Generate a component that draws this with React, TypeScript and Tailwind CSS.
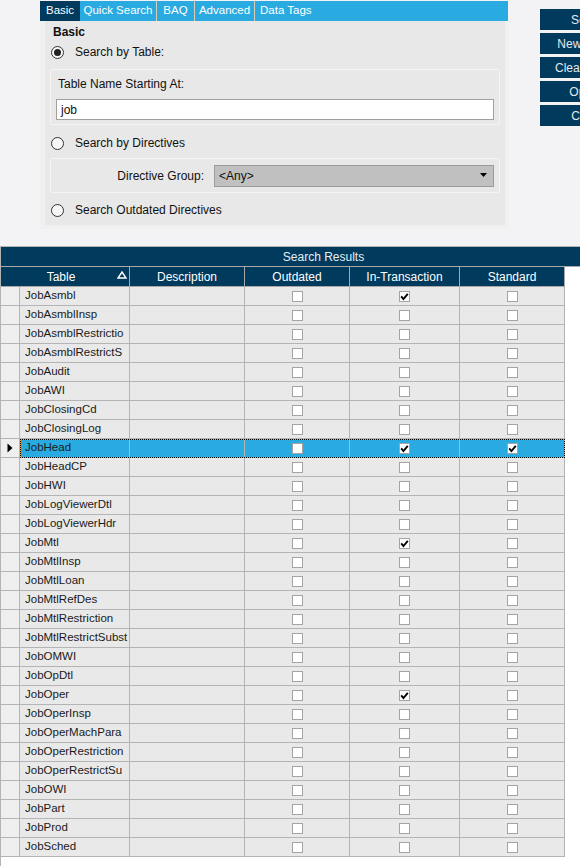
const rows: { name: string; outdated?: boolean; trans?: boolean; std?: boolean; selected?: boolean }[] = [
  { name: "JobAsmbl", trans: true },
  { name: "JobAsmblInsp" },
  { name: "JobAsmblRestrictio" },
  { name: "JobAsmblRestrictS" },
  { name: "JobAudit" },
  { name: "JobAWI" },
  { name: "JobClosingCd" },
  { name: "JobClosingLog" },
  { name: "JobHead", trans: true, std: true, selected: true },
  { name: "JobHeadCP" },
  { name: "JobHWI" },
  { name: "JobLogViewerDtl" },
  { name: "JobLogViewerHdr" },
  { name: "JobMtl", trans: true },
  { name: "JobMtlInsp" },
  { name: "JobMtlLoan" },
  { name: "JobMtlRefDes" },
  { name: "JobMtlRestriction" },
  { name: "JobMtlRestrictSubst" },
  { name: "JobOMWI" },
  { name: "JobOpDtl" },
  { name: "JobOper", trans: true },
  { name: "JobOperInsp" },
  { name: "JobOperMachPara" },
  { name: "JobOperRestriction" },
  { name: "JobOperRestrictSu" },
  { name: "JobOWI" },
  { name: "JobPart" },
  { name: "JobProd" },
  { name: "JobSched" },
];

function Radio({ checked, label }: { checked?: boolean; label: string }) {
  return (
    <div className="flex items-center h-[16px] ml-[6px]">
      <span className="w-[13px] h-[13px] rounded-full border border-[#333] bg-[#f7f7f7] flex items-center justify-center">
        {checked && <span className="w-[7px] h-[7px] rounded-full bg-[#222]" />}
      </span>
      <span className="ml-[11px] text-[12px] text-[#111]">{label}</span>
    </div>
  );
}

function Check({ on }: { on?: boolean }) {
  return (
    <span className="w-[11px] h-[11px] border border-[#a4a4a4] bg-white flex items-center justify-center">
      {on && (
        <svg width="9" height="9" viewBox="0 0 9 9">
          <path d="M1.2 4.4 L3.4 7 L7.8 1.8" fill="none" stroke="#000" strokeWidth="1.9" />
        </svg>
      )}
    </span>
  );
}

const tabs = [
  { label: "Basic", w: "w-[40px]", active: true },
  { label: "Quick Search", w: "w-[77px]" },
  { label: "BAQ", w: "w-[38px]" },
  { label: "Advanced", w: "w-[60px]" },
  { label: "Data Tags", w: "w-[253px]" },
];

const buttons = ["Search", "New Search", "Clear Search", "Options", "Cancel"];

export default function App() {
  return (
    <div
      className="w-[580px] h-[866px] overflow-hidden bg-[#f3f3f5]"
      style={{ fontFamily: '"Liberation Sans", Arial, sans-serif' }}
    >
      {/* top search area */}
      <div className="h-[246px] flex">
        <div className="ml-[40px] mt-[1px] w-[468px] shrink-0">
          <div className="flex h-[20px] bg-[#29abe2]">
            {tabs.map((t, i) => (
              <div
                key={t.label}
                className={`${t.w} shrink-0 flex items-center text-[11.5px] text-white whitespace-nowrap overflow-hidden ${
                  t.active ? "bg-[#003a5c] pl-[6px]" : i === tabs.length - 1 ? "pl-[5px]" : "justify-center"
                } ${i > 0 && i < tabs.length - 1 ? "border-r border-[#d9cdb8]" : ""}`}
              >
                {t.label}
              </div>
            ))}
          </div>
          <div className="bg-[#f0f0f1] pl-[5px] pr-[3px] pb-[4px]">
            <div className="bg-[#e8e8e8] h-[204px] pt-[3px] flex flex-col">
              <div className="h-[16px] pl-[8px] flex items-center text-[12px] font-bold text-[#111]">Basic</div>
              <div className="mt-[4px]">
                <Radio checked label="Search by Table:" />
              </div>
              <div className="mt-[9px] ml-[5px] w-[450px] h-[56px] border border-[#f5f5f5] rounded-[2px] pt-[6px]">
                <div className="h-[16px] pl-[7px] flex items-center text-[12px] text-[#111]">Table Name Starting At:</div>
                <div className="mt-[7px] ml-[5px] w-[438px] h-[21px] bg-white border border-[#a0a0a0] pl-[4px] flex items-center text-[12px] text-[#111]">
                  job
                </div>
              </div>
              <div className="mt-[10px]">
                <Radio label="Search by Directives" />
              </div>
              <div className="mt-[7px] ml-[5px] w-[450px] h-[35px] border border-[#f5f5f5] rounded-[2px] flex items-center">
                <span className="w-[153px] text-right text-[12px] text-[#111]">Directive Group:</span>
                <div className="ml-[10px] w-[280px] h-[22px] bg-[#c0c0c0] border border-[#9c9c9c] flex items-center justify-between pl-[4px] pr-[6px] text-[12px] text-[#111]">
                  <span>&lt;Any&gt;</span>
                  <svg width="7" height="5" viewBox="0 0 7 5">
                    <path d="M0 0 H7 L3.5 4 Z" fill="#000" />
                  </svg>
                </div>
              </div>
              <div className="mt-[9px]">
                <Radio label="Search Outdated Directives" />
              </div>
            </div>
          </div>
        </div>
        <div className="ml-[32px] mt-[9px] flex flex-col gap-[3px] shrink-0">
          {buttons.map((b) => (
            <div
              key={b}
              className="w-[100px] h-[21px] bg-[#003a5c] flex items-center justify-center text-[12px] text-[#e4eaee] whitespace-nowrap"
            >
              {b}
            </div>
          ))}
        </div>
      </div>

      {/* results grid */}
      <div className="w-[646px] h-[620px] bg-white border-t border-l border-[#b4b4b4]">
        <div className="h-[20px] bg-[#003a5c] border-b border-[#a8a8a8] flex items-center justify-center text-[12px] text-[#e6edf1]">
          Search Results
        </div>
        <div className="flex h-[20px]">
          <div className="w-[129px] bg-[#003a5c] border-r border-b border-[#a8a8a8] flex items-center text-[12px] text-white">
            <span className="flex-1 text-center pl-[4px]">Table</span>
            <svg width="10" height="8" viewBox="0 0 10 8" className="mr-[2px] mb-[3px]">
              <path d="M5 1 L9 7 H1 Z" fill="none" stroke="#fff" strokeWidth="1.4" />
            </svg>
          </div>
          {[
            ["Description", "w-[115px]"],
            ["Outdated", "w-[105px]"],
            ["In-Transaction", "w-[110px]"],
            ["Standard", "w-[105px]"],
          ].map(([h, w]) => (
            <div
              key={h}
              className={`${w} bg-[#003a5c] border-r border-b border-[#a8a8a8] flex items-center justify-center text-[12px] text-white`}
            >
              {h}
            </div>
          ))}
        </div>
        {rows.map((r) => (
          <div key={r.name} className="flex h-[19px]">
            <div className="w-[19px] bg-[#efefef] border-r border-b border-[#b4b4b4] flex items-center justify-center">
              {r.selected && (
                <svg width="6" height="10" viewBox="0 0 6 10">
                  <path d="M0.5 0.5 L5.5 5 L0.5 9.5 Z" fill="#000" />
                </svg>
              )}
            </div>
            <div
              className={`flex ${
                r.selected
                  ? "bg-[#29abe2] shadow-[inset_0_0_0_1px_#f0a030] outline-1 outline-dotted outline-black -outline-offset-1"
                  : "bg-[#e9e9e9]"
              }`}
            >
              <div className="w-[110px] border-r border-b border-[#b4b4b4] pl-[5px] flex items-center text-[11.5px] text-[#1a1a1a] whitespace-nowrap overflow-hidden">
                {r.name}
              </div>
              <div className="w-[115px] border-r border-b border-[#b4b4b4]" />
              <div className="w-[105px] border-r border-b border-[#b4b4b4] flex items-center justify-center">
                <Check on={r.outdated} />
              </div>
              <div className="w-[110px] border-r border-b border-[#b4b4b4] flex items-center justify-center">
                <Check on={r.trans} />
              </div>
              <div className="w-[105px] border-r border-b border-[#b4b4b4] flex items-center justify-center">
                <Check on={r.std} />
              </div>
            </div>
          </div>
        ))}
      </div>
    </div>
  );
}
